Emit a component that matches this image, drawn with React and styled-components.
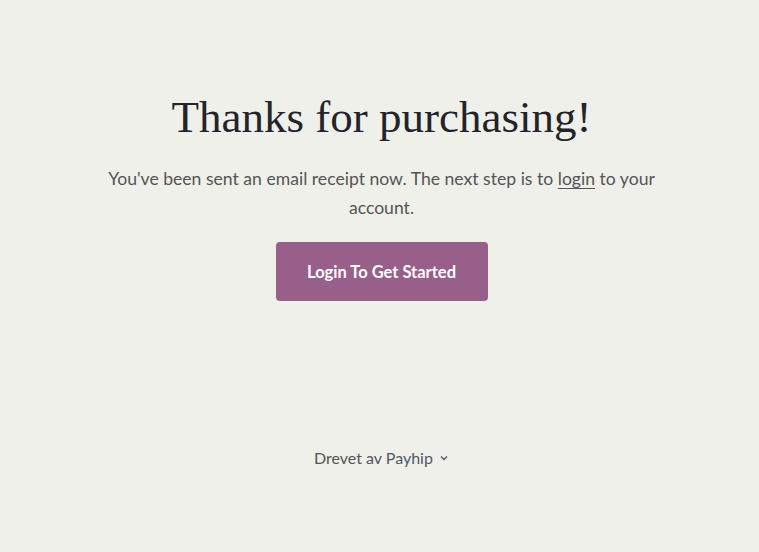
import React from "react";
import styled, { createGlobalStyle } from "styled-components";

const Global = createGlobalStyle`
  html, body { margin: 0; padding: 0; background: #f0f0eb; }
  body { font-family: "Lato", "Liberation Sans", sans-serif; }
`;

const Page = styled.div`
  min-height: 552px;
  box-sizing: border-box;
  padding-left: 4px;
  display: flex;
  flex-direction: column;
  align-items: center;
  background: #f0f0eb;
`;

const Main = styled.main`
  display: flex;
  flex-direction: column;
  align-items: center;
  padding-top: 91px;
  width: 580px;
`;

const Title = styled.h1`
  margin: 0;
  font-family: "Liberation Serif", "Times New Roman", serif;
  font-weight: 400;
  font-size: 45px;
  line-height: 52px;
  color: #24232a;
`;

const Lead = styled.p`
  margin: 21px 0 0;
  font-family: "Lato", "Liberation Sans", sans-serif;
  font-size: 17.6px;
  line-height: 29px;
  color: #555456;
  text-align: center;
`;

const Link = styled.a`
  color: inherit;
  text-decoration: underline;
  text-underline-offset: 3px;
`;

const Button = styled.a`
  margin-top: 20px;
  width: 212px;
  height: 59px;
  display: flex;
  align-items: center;
  justify-content: center;
  background: #975f89;
  border-radius: 4px;
  color: #fff;
  font-weight: 700;
  font-size: 16.5px;
  text-decoration: none;
`;

const Footer = styled.footer`
  margin-top: 147px;
  display: flex;
  align-items: center;
  gap: 6px;
  font-size: 16px;
  color: #555456;
`;

const Brand = styled.span`
  color: #4e5a66;
`;

export default function App() {
  return (
    <Page>
      <Global />
      <Main>
        <Title>Thanks for purchasing!</Title>
        <Lead>
          You've been sent an email receipt now. The next step is to{" "}
          <Link href="#">login</Link> to your account.
        </Lead>
        <Button href="#">Login To Get Started</Button>
      </Main>
      <Footer>
        <span>
          Drevet av <Brand>Payhip</Brand>
        </span>
        <svg width="10" height="10" viewBox="0 0 10 10" fill="none">
          <path d="M2 3.5 L5 6.5 L8 3.5" stroke="#555456" strokeWidth="1.4" />
        </svg>
      </Footer>
    </Page>
  );
}
